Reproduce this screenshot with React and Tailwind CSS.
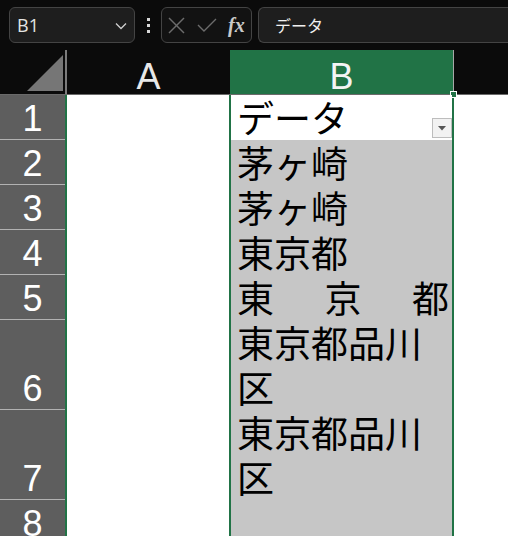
import React from "react";

const jp = { fontFamily: '"Noto Sans CJK JP", "Noto Sans", sans-serif' };
const latin = { fontFamily: '"Liberation Sans", Arial, sans-serif' };

const rows = [
  { n: 1, h: "h-[45px]" },
  { n: 2, h: "h-[45px]" },
  { n: 3, h: "h-[45px]" },
  { n: 4, h: "h-[45px]" },
  { n: 5, h: "h-[45px]" },
  { n: 6, h: "h-[90px]" },
  { n: 7, h: "h-[90px]" },
  { n: 8, h: "h-[45px]" },
];

function Toolbar() {
  return (
    <div className="h-[50px] flex items-start pt-[7px] bg-[#0b0b0b]">
      {/* name box */}
      <div className="ml-[9px] w-[126px] h-[36px] rounded-[6px] border border-[#444] bg-[#1e1e1e] flex items-center justify-between pl-[7px] pr-[7px]">
        <span className="text-[18px] text-[#e4e4e4]" style={{ fontFamily: '"Open Sans", "Noto Sans", sans-serif' }}>B1</span>
        <svg width="12" height="8" viewBox="0 0 12 8" className="mt-[1px]">
          <polyline points="1,1.5 6,6.5 11,1.5" fill="none" stroke="#cfcfcf" strokeWidth="1.3" />
        </svg>
      </div>
      {/* more dots */}
      <div className="w-[26px] h-[36px] flex flex-col items-center justify-center gap-[3px]">
        <div className="w-[3px] h-[3px] bg-[#d8d8d8]" />
        <div className="w-[3px] h-[3px] bg-[#d8d8d8]" />
        <div className="w-[3px] h-[3px] bg-[#d8d8d8]" />
      </div>
      {/* cancel / enter / function */}
      <div className="w-[91px] h-[36px] rounded-[6px] border border-[#444] bg-[#121212] flex items-center pl-[6px] gap-[12px]">
        <svg width="17" height="17" viewBox="0 0 17 17">
          <line x1="1" y1="1" x2="16" y2="16" stroke="#6c6c6c" strokeWidth="1.4" />
          <line x1="16" y1="1" x2="1" y2="16" stroke="#6c6c6c" strokeWidth="1.4" />
        </svg>
        <svg width="20" height="14" viewBox="0 0 20 14">
          <polyline points="1,7 7,13 19,1" fill="none" stroke="#6c6c6c" strokeWidth="1.4" />
        </svg>
        <span className="italic font-bold text-[20px] leading-none text-[#c9c9c9] -ml-[1px]" style={{ fontFamily: '"Liberation Serif", "Times New Roman", serif' }}>
          fx
        </span>
      </div>
      {/* formula input */}
      <div className="ml-[6px] flex-1 h-[36px] rounded-l-[6px] border border-r-0 border-[#444] bg-[#1e1e1e] flex items-center pl-[16px]">
        <span className="text-[16px] text-[#f0f0f0]" style={jp}>データ</span>
      </div>
    </div>
  );
}

function ColumnHeaders() {
  return (
    <div className="relative h-[45px] flex bg-[#0b0b0b] border-b border-[#6a6a6a]">
      {/* select-all corner */}
      <div className="w-[65px] h-full flex items-end justify-end pr-[2px] pb-[3px]">
        <svg width="36" height="36" viewBox="0 0 36 36">
          <polygon points="36,0 36,36 0,36" fill="#767676" />
        </svg>
      </div>
      <div className="w-[2px] h-full bg-[#7c7c7c]" />
      <div className="w-[163px] h-full flex items-end justify-center text-[36px] leading-none text-[#e8e8e8]" style={latin}>
        <span className="mb-[-1px]">A</span>
      </div>
      <div className="w-[223px] h-full flex items-end justify-center text-[36px] leading-none text-[#f4f4f4] bg-[#217346]" style={latin}>
        <span className="mb-[-1px]">B</span>
      </div>
      <div className="w-px h-full bg-[#a8a8a8]" />
      <div className="flex-1" />
      {/* fill handle */}
      <div className="absolute left-[450px] top-[41px] w-[7px] h-[7px] bg-[#217346] border border-white" />
    </div>
  );
}

function CellText({ children }) {
  return (
    <div className="pl-[6px] text-[37px] leading-[45px] text-black" style={jp}>
      {children}
    </div>
  );
}

export default function App() {
  return (
    <div className="w-[508px] h-[536px] overflow-hidden bg-white">
      <Toolbar />
      <ColumnHeaders />
      <div className="flex">
        {/* row numbers */}
        <div className="w-[65px] flex flex-col bg-[#5e5e5e]">
          {rows.map((r) => (
            <div
              key={r.n}
              className={`${r.h} shrink-0 border-b border-[#b2b2b2] flex items-end justify-center pb-[2px] text-[36px] leading-none text-white`}
              style={latin}
            >
              {r.n}
            </div>
          ))}
        </div>
        <div className="w-[2px] bg-[#217346]" />
        {/* column A */}
        <div className="w-[162px] bg-white" />
        <div className="w-[2px] bg-[#217346]" />
        {/* column B */}
        <div className="w-[221px] flex flex-col bg-[#c6c6c6]">
          <div className="relative h-[45px] shrink-0 bg-white">
            <CellText>データ</CellText>
            <div className="absolute right-0 bottom-[2px] w-[20px] h-[20px] border border-[#bdbdbd] bg-[#f2f2f2] flex items-center justify-center">
              <svg width="8" height="5" viewBox="0 0 8 5">
                <polygon points="0,0 8,0 4,4.5" fill="#555" />
              </svg>
            </div>
          </div>
          <div className="h-[45px] shrink-0">
            <CellText>茅ヶ崎</CellText>
          </div>
          <div className="h-[45px] shrink-0">
            <CellText>茅ヶ崎</CellText>
          </div>
          <div className="h-[45px] shrink-0">
            <CellText>東京都</CellText>
          </div>
          <div className="h-[45px] shrink-0 pl-[6px] pr-[3px] flex justify-between text-[37px] leading-[45px] text-black" style={jp}>
            <span>東</span>
            <span>京</span>
            <span>都</span>
          </div>
          <div className="h-[90px] shrink-0">
            <CellText>東京都品川</CellText>
            <CellText>区</CellText>
          </div>
          <div className="h-[90px] shrink-0">
            <CellText>東京都品川</CellText>
            <CellText>区</CellText>
          </div>
          <div className="h-[45px] shrink-0" />
        </div>
        <div className="w-[2px] bg-[#217346]" />
        <div className="flex-1 bg-white" />
      </div>
    </div>
  );
}
